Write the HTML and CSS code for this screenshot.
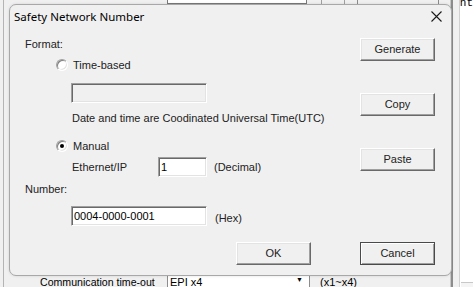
FILE: index.html
```html
<!DOCTYPE html>
<html>
<head>
<meta charset="utf-8">
<link rel="stylesheet" href="styles.css">
</head>
<body>
<div class="app">
  <div class="main">
    <div class="inner">
      <div class="bg-row bg-top">
        <span class="bg-label">SCID</span>
        <span class="bg-input">0000-0000-0000-0000</span>
        <span class="bg-sep"></span>
        <span class="bg-btn">SCID Read(S)</span>
      </div>
      <div class="bg-row bg-bottom">
        <span class="bg-label">Communication time-out</span>
        <span class="bg-combo"><span>EPI x4</span><span class="arrow">&#9660;</span></span>
        <span class="bg-note">(x1~x4)</span>
      </div>
    </div>
  </div>
  <div class="side"><span class="mono">nt</span><span class="side-line"></span></div>
</div>

<div class="dialog">
  <div class="titlebar">
    <span class="title">Safety Network Number</span>
    <svg class="close" width="11" height="11" viewBox="0 0 11 11"><path d="M0.5 0.5 L10.5 10.5 M10.5 0.5 L0.5 10.5" stroke="#1a1a1a" stroke-width="1.1" fill="none"/></svg>
  </div>
  <div class="body">
    <div class="form">
      <div class="left">
        <div class="txt">Format:</div>
        <div class="radio-row r1"><span class="radio"></span><span>Time-based</span></div>
        <div class="box wide disabled"></div>
        <div class="txt ind utc">Date and time are Coodinated Universal Time(UTC)</div>
        <div class="radio-row r2"><span class="radio checked"></span><span>Manual</span></div>
        <div class="field-row eth"><span class="eth-label">Ethernet/IP</span><span class="box small">1</span><span class="unit">(Decimal)</span></div>
        <div class="txt num">Number:</div>
        <div class="field-row numrow"><span class="box wide">0004-0000-0001</span><span class="unit hex">(Hex)</span></div>
      </div>
      <div class="right">
        <div class="btn b-gen">Generate</div>
        <div class="btn b-copy">Copy</div>
        <div class="btn b-paste">Paste</div>
      </div>
    </div>
    <div class="footer">
      <div class="btn">OK</div>
      <div class="btn default">Cancel</div>
    </div>
  </div>
</div>
</body>
</html>
```

FILE: styles.css
```css
html, body {
  margin: 0;
  padding: 0;
}
body {
  width: 473px;
  height: 287px;
  overflow: hidden;
  position: relative;
  background: #fff;
  font-family: "Liberation Sans", Arial, sans-serif;
  font-size: 11px;
  color: #222;
}

/* background application window */
.app {
  display: flex;
  height: 287px;
}
.main {
  width: 452px;
  background: #f0f0f0;
  padding-left: 3px;
  box-sizing: border-box;
  display: flex;
}
.inner {
  flex: 1;
  border-left: 1px solid #b4b4b4;
  display: flex;
  flex-direction: column;
  justify-content: space-between;
}
.bg-row {
  display: flex;
  align-items: center;
  height: 20px;
}
.bg-top {
  margin-top: -16px;
}
.bg-label {
  margin-left: 36px;
  width: 127px;
  font-size: 10.6px;
  color: #000;
}
.bg-input {
  width: 136px;
  height: 18px;
  border: 1px solid #7a7a7a;
  background: #fff;
  line-height: 18px;
  padding-left: 2px;
  box-sizing: content-box;
}
.bg-sep {
  width: 22px;
  height: 20px;
  margin-left: 14px;
  border-left: 1px solid #a0a0a0;
  border-right: 1px solid #a0a0a0;
}
.bg-btn {
  margin-left: 12px;
  width: 80px;
  height: 20px;
  border: 1px solid #8c8c8c;
  text-align: center;
  line-height: 20px;
}
.bg-bottom {
  height: 14px;
  margin-bottom: -3px;
  align-items: flex-start;
}
.bg-combo {
  width: 143px;
  height: 20px;
  margin-top: -4px;
  background: #fff;
  border-left: 1px solid #8c8c8c;
  border-right: 1px solid #8c8c8c;
  display: flex;
  justify-content: space-between;
  padding: 4px 6px 0 2px;
  box-sizing: border-box;
  font-size: 11px;
  color: #000;
}
.arrow {
  font-size: 7px;
  line-height: 8px;
}
.bg-note {
  margin-left: 10px;
  font-size: 11px;
  color: #000;
}

.side {
  flex: 1;
  background: linear-gradient(to right, #c8c8c8 0 1px, #8c8c8c 1px 3px, #f0f0f0 3px 9px, #d0d0d0 9px 10px, #fff 10px);
  display: flex;
  flex-direction: column;
  justify-content: space-between;
}
.mono {
  font-family: "Liberation Mono", monospace;
  font-size: 11px;
  margin-left: 10px;
  margin-top: -3px;
  line-height: 12px;
  color: #000;
}
.side-line {
  height: 4px;
  margin-left: 11px;
  border-top: 1px solid #c8c8c8;
  background: #f4f4f4;
}

/* dialog (overlay) */
.dialog {
  position: absolute;
  left: 9px;
  top: 4px;
  width: 443px;
  height: 272px;
  box-sizing: border-box;
  background: #f0f0f0;
  border: 1px solid #a8a8a8;
  border-radius: 7px;
  box-shadow: 0 0 3px rgba(0,0,0,0.12);
  display: flex;
  flex-direction: column;
}
.titlebar {
  height: 23px;
  display: flex;
  align-items: center;
  justify-content: space-between;
  padding: 0 9px 0 4px;
}
.title {
  font-family: "Noto Sans", "Open Sans", sans-serif;
  font-size: 11.5px;
  color: #000;
}
.close {
  display: block;
}
.body {
  padding: 9px 16px 0 15px;
  display: flex;
  flex-direction: column;
}
.form {
  display: flex;
  justify-content: space-between;
  height: 189px;
}
.left {
  display: flex;
  flex-direction: column;
  align-items: flex-start;
}
.txt {
  line-height: 14px;
  height: 14px;
}
.radio-row {
  display: flex;
  align-items: center;
  height: 14px;
  margin-left: 31px;
  gap: 5px;
}
.r1 { margin-top: 7px; }
.r2 { margin-top: 14px; }
.radio {
  width: 12px;
  height: 12px;
  box-sizing: border-box;
  border-radius: 50%;
  border: 1px solid;
  border-color: #a0a0a0 #ffffff #ffffff #a0a0a0;
  box-shadow: inset 1px 1px #808080, inset -1px -1px #e3e3e3;
  background: #fff;
  position: relative;
}
.radio.checked::after {
  content: "";
  position: absolute;
  left: 3px;
  top: 3px;
  width: 4px;
  height: 4px;
  border-radius: 50%;
  background: #000;
}
.box {
  height: 20px;
  box-sizing: border-box;
  border: 1px solid;
  border-color: #a0a0a0 #ffffff #ffffff #a0a0a0;
  box-shadow: inset 1px 1px #696969, inset -1px -1px #e3e3e3;
  background: #fff;
  line-height: 18px;
  padding-left: 2px;
  color: #000;
}
.box.wide {
  width: 136px;
  margin-left: 46px;
}
.box.disabled {
  background: #f0f0f0;
  margin-top: 11px;
}
.utc {
  margin-left: 47px;
  margin-top: 8px;
}
.field-row {
  display: flex;
  align-items: center;
}
.eth {
  margin-top: 4px;
}
.eth-label {
  margin-left: 47px;
  width: 86px;
}
.box.small {
  width: 49px;
}
.unit {
  margin-left: 7px;
}
.num {
  margin-top: 5px;
}
.numrow {
  margin-top: 10px;
}
.unit.hex {
  margin-left: 8px;
  margin-top: 3px;
}
.right {
  display: flex;
  flex-direction: column;
}
.btn {
  width: 75px;
  height: 23px;
  box-sizing: border-box;
  border: 1px solid;
  border-color: #ffffff #696969 #696969 #ffffff;
  box-shadow: inset -1px -1px #a0a0a0, inset 1px 1px #e3e3e3;
  background: #f0f0f0;
  text-align: center;
  line-height: 21px;
  color: #222;
}
.b-gen { margin-top: 1px; }
.b-copy { margin-top: 32px; }
.b-paste { margin-top: 32px; }
.footer {
  display: flex;
  justify-content: flex-end;
  gap: 49px;
  margin-top: 16px;
}
.btn.default {
  border: 1px solid #4a4a4a;
  box-shadow: inset 1px 1px #fff, inset -1px -1px #a0a0a0;
}
```
